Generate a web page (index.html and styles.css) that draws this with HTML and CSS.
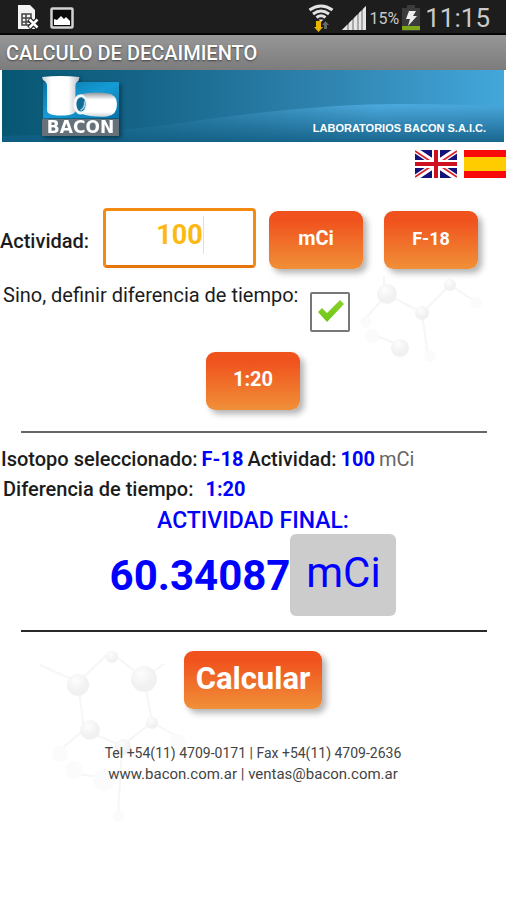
FILE: index.html
```html
<!DOCTYPE html>
<html lang="es">
<head>
<meta charset="utf-8">
<meta name="viewport" content="width=device-width, initial-scale=1">
<title>Calculo de decaimiento</title>
<link rel="stylesheet" href="styles.css">
</head>
<body>
<div class="status">
  <div class="status-group">
    <svg width="22" height="26" viewBox="0 0 22 26" aria-hidden="true">
      <path d="M0 0h12l5 5v19H0z" fill="#f4f4f4"/>
      <path d="M4 9h9v11H4zM4 13h9M4 17h9M8 9v11" fill="none" stroke="#444" stroke-width="1.500"/>
      <path d="M11 14l9 9M20 14l-9 9" stroke="#1d1d1d" stroke-width="5"/>
      <path d="M11.500 14.500l8 8M19.500 14.500l-8 8" stroke="#fff" stroke-width="2.500"/>
    </svg>
    <svg width="24" height="22" viewBox="0 0 24 22" aria-hidden="true">
      <rect x="1.500" y="1.500" width="21" height="19" rx="1" fill="#0c0c0c" stroke="#d2d2d2" stroke-width="2.500"/>
      <path d="M4 18v-6l3 1 4-4 3 3 2-2 4 4v4z" fill="#fff"/>
    </svg>
  </div>
  <div class="status-group status-right">
    <svg width="26" height="28" viewBox="0 0 26 28" aria-hidden="true">
      <g fill="none" stroke="#e2e2e2" stroke-width="3">
        <path d="M1.500 6q11.500-8 23 0"/><path d="M5 10q8-6 16 0"/><path d="M8.500 13.500q4.500-3.500 9 0"/>
      </g>
      <path d="M10.500 15.500h5L13 18z" fill="#e2e2e2"/>
      <path d="M8 17h5v6h2l-4.500 5L6 23h2z" fill="#e8b500"/>
      <path d="M16 25v-4h-2l3.500-4 3.500 4h-2v4z" fill="#686868"/>
    </svg>
    <svg class="signal" width="25" height="24" viewBox="0 0 25 24" aria-hidden="true">
      <path d="M0 24L24 0v24z" fill="#a8a8a8"/>
      <path d="M0 24l5-5v5zM7 24v-7l3-3v10zM12 24V12l3-3v15zM17 24V7l2-2v19zM21 24V3l3-3v24z" fill="#e6e6e6"/>
    </svg>
    <span class="percent">15%</span>
    <svg width="18" height="26" viewBox="0 0 18 26" aria-hidden="true">
      <path d="M0 3h5V0h8v3h5v23H0z" fill="#3b3b3b"/>
      <path d="M0 21h18v4H0z" fill="#7da61a"/>
      <path d="M7 6h7l-3 5h4L6 21l2-7H4z" fill="#eee"/>
    </svg>
    <span class="clock">11:15</span>
  </div>
</div>
<h1 class="title">CALCULO DE DECAIMIENTO</h1>

<header class="banner">
  <svg class="banner-wave" viewBox="0 0 502 72" preserveAspectRatio="none" aria-hidden="true">
    <defs>
      <linearGradient id="sky"><stop offset="0" stop-color="#075773"/><stop offset=".3" stop-color="#17668b"/><stop offset=".65" stop-color="#2f84b0"/><stop offset="1" stop-color="#43a7db"/></linearGradient>
      <linearGradient id="waveX"><stop offset="0" stop-color="#0b6286"/><stop offset=".35" stop-color="#2d82ab"/><stop offset=".75" stop-color="#4daade"/><stop offset="1" stop-color="#4aa8dc"/></linearGradient>
      <linearGradient id="waveY" x2="0" y2="1"><stop offset="0" stop-color="#105b80" stop-opacity="0"/><stop offset="1" stop-color="#105b80" stop-opacity=".85"/></linearGradient>
    </defs>
    <path d="M0 0h502v72H0z" fill="url(#sky)"/>
    <path d="M0 66Q80 66 160 56Q300 34 400 34Q455 34 502 37V72H0z" fill="url(#waveX)"/>
    <path d="M0 66Q80 66 160 56Q300 34 400 34Q455 34 502 37V72H0z" fill="url(#waveY)"/>
  </svg>
  <div class="logo">
    <svg class="logo-art" viewBox="0 0 76 42" aria-hidden="true">
      <defs>
        <linearGradient id="blue" x2="1" y2="1"><stop offset="0" stop-color="#0873a6"/><stop offset=".5" stop-color="#159bd4"/><stop offset="1" stop-color="#0874a8"/></linearGradient>
        <linearGradient id="tube"><stop offset="0" stop-color="#cbd2d8"/><stop offset=".25" stop-color="#fff"/><stop offset=".7" stop-color="#fff"/><stop offset="1" stop-color="#b4bbc2"/></linearGradient>
        <linearGradient id="lying" x2="0" y2="1"><stop offset="0" stop-color="#8b949c"/><stop offset=".3" stop-color="#fff"/><stop offset=".8" stop-color="#fff"/><stop offset="1" stop-color="#cbd2d8"/></linearGradient>
      </defs>
      <path d="M1 6h75v36H1z" fill="url(#blue)"/>
      <path d="M0 1q18-2 37 0l-1 4q-3 1-3 5v24q0 5-14 5T5 34V10Q5 6 1 4z" fill="url(#tube)"/>
      <path d="M38 18q12-3 26-1 10 1 10 11 0 11-10 12-15 1-26-3z" fill="url(#lying)"/>
      <ellipse cx="38" cy="28" rx="7" ry="10" fill="#f4f7fa"/>
      <ellipse cx="38.500" cy="28" rx="4.500" ry="7" fill="#126c96"/>
      <path d="M38 34q5-3 4-9" fill="none" stroke="#9ed3ee" stroke-width="1.500"/>
    </svg>
    <span class="logo-name">BACON</span>
  </div>
  <span class="company">LABORATORIOS BACON S.A.I.C.</span>
</header>

<main class="page">
  <nav class="flags">
    <a class="flag" href="#en" aria-label="English">
      <svg viewBox="0 0 42 28" preserveAspectRatio="none" aria-hidden="true">
        <path d="M0 0h42v28H0z" fill="#12127a"/>
        <path d="M0 0l42 28M42 0L0 28" stroke="#fff" stroke-width="6"/>
        <path d="M0 1l18 12M42 1L24 13M0 27l18-12M42 27L24 15" stroke="#d8232f" stroke-width="1.800"/>
        <path d="M21 0v28M0 14h42" stroke="#fff" stroke-width="8"/>
        <path d="M21 0v28M0 14h42" stroke="#cf1020" stroke-width="4"/>
      </svg>
    </a>
    <a class="flag" href="#es" aria-label="Español">
      <svg viewBox="0 0 42 28" preserveAspectRatio="none" aria-hidden="true">
        <path d="M0 0h42v28H0z" fill="#f80a0a"/><path d="M0 7h42v14H0z" fill="#fc0"/>
      </svg>
    </a>
  </nav>

  <form class="form">
    <svg class="molecule molecule-top" viewBox="0 0 130 130" aria-hidden="true">
      <defs><radialGradient id="atom" cx=".4" cy=".3"><stop offset="0" stop-color="#fdfdfd"/><stop offset="1" stop-color="#f1f1f1"/></radialGradient></defs>
      <path d="M6 72L27 48 62 67 90 39 116 56M62 67l6 44M12 88l30 12M24 30v12" fill="none" stroke="#f6f6f6" stroke-width="2"/>
      <g fill="url(#atom)"><circle cx="27" cy="48" r="10"/><circle cx="62" cy="67" r="7"/><circle cx="90" cy="39" r="6"/><circle cx="40" cy="102" r="9"/></g>
      <g fill="#fbfbfb"><circle cx="6" cy="76" r="6"/><circle cx="12" cy="90" r="7"/><circle cx="116" cy="57" r="6"/><circle cx="70" cy="110" r="6"/></g>
    </svg>
    <div class="row">
      <label class="activity-label" for="activity">Actividad:</label>
      <span class="field"><input id="activity" type="text" inputmode="decimal" value="100"><i class="caret"></i></span>
      <button class="btn" type="button">mCi</button>
      <button class="btn btn-small" type="button">F-18</button>
    </div>
    <div class="row-check">
      <label for="diff">Sino, definir diferencia de tiempo:</label>
      <span class="check">
        <input id="diff" type="checkbox" checked>
        <svg viewBox="0 0 28 24" aria-hidden="true">
          <defs><linearGradient id="tick" x2="0" y2="1"><stop offset="0" stop-color="#8ad22c"/><stop offset="1" stop-color="#6cc714"/></linearGradient></defs>
          <path d="M1 13l4-4 5 5L23 1l4 4-17 18z" fill="url(#tick)"/>
        </svg>
      </span>
    </div>
    <button class="btn btn-time" type="button">1:20</button>
  </form>

  <hr class="rule rule-soft">

  <section class="results">
    <p class="line"><b>Isotopo seleccionado:</b> <b class="value">F-18</b> <b>Actividad:</b> <b class="value">100</b> <span class="unit">mCi</span></p>
    <p class="line line-time"><b>Diferencia de tiempo:</b><b class="value">1:20</b></p>
    <h2 class="final-title">ACTIVIDAD FINAL:</h2>
    <div class="final"><output class="final-value">60.34087</output><button class="final-unit" type="button">mCi</button></div>
  </section>

  <hr class="rule">

  <section class="bottom">
    <svg class="molecule molecule-bottom" viewBox="0 0 160 190" aria-hidden="true">
      <path d="M10 33l38 17L80 20l34 26 8 44 24 14M48 50l6 48 38 16 30-24M54 98l-24 20M38 140l34 6M92 114l-4 70M114 46l20-14" fill="none" stroke="#f6f6f6" stroke-width="2"/>
      <g fill="url(#atom)"><circle cx="48" cy="53" r="11"/><circle cx="82" cy="25" r="6"/><circle cx="114" cy="47" r="13"/><circle cx="60" cy="98" r="10"/><circle cx="93" cy="115" r="8"/><circle cx="122" cy="91" r="6"/></g>
      <g fill="#fbfbfb"><circle cx="30" cy="122" r="8"/><circle cx="44" cy="138" r="9"/><circle cx="74" cy="148" r="11"/><circle cx="148" cy="110" r="8"/><circle cx="89" cy="184" r="6"/></g>
    </svg>
    <button class="btn btn-calc" type="button">Calcular</button>
    <footer class="contact">
      <p class="phone">Tel +54(11) 4709-0171 | Fax +54(11) 4709-2636</p>
      <p class="web">www.bacon.com.ar | ventas@bacon.com.ar</p>
    </footer>
  </section>
</main>
</body>
</html>
```
FILE: styles.css
```css
* { box-sizing: border-box; }
body {
  margin: 0;
  min-height: 100vh;
  background: #fff;
  color: #1c1c1c;
  font-family: Roboto, "Liberation Sans", sans-serif;
}
p, h1, h2 { margin: 0; }
button, input { font-family: inherit; }

.status {
  display: flex;
  justify-content: space-between;
  align-items: center;
  height: 35px;
  padding: 3px 16px 0 18px;
  background: #1d1d1d;
  border-bottom: 2px solid #050505;
  color: #c9c9c9;
}
.status-group { display: flex; align-items: center; gap: 10px; }
.status-right { gap: 3px; }
.signal { margin-left: 5px; }
.percent { font-size: 16px; }
.clock { font-size: 26px; line-height: 28px; margin-left: 2px; }

.title {
  height: 35px;
  padding-left: 6px;
  background: linear-gradient(#979797, #7c7c7c);
  color: #fff;
  font-size: 20px;
  font-weight: 500;
  line-height: 36px;
  text-shadow: 0 1px 2px #444;
}

.banner {
  display: flex;
  justify-content: space-between;
  align-items: flex-end;
  height: 72px;
  margin: 0 2px;
  padding: 0 18px 6px 40px;
  position: relative;
}
.banner-wave { position: absolute; inset: 0; width: 100%; height: 100%; }
.logo {
  display: flex;
  flex-direction: column;
  position: relative;
  width: 77px;
  filter: drop-shadow(2px 2px 2px #06384e);
}
.logo-art { display: block; width: 100%; }
.logo-name {
  background: #66717a;
  color: #fff;
  font: bold 17px/17px "DejaVu Sans", sans-serif;
  text-align: center;
}
.company {
  position: relative;
  color: #fff;
  font: bold 11px/16px "Liberation Sans", sans-serif;
}

.flags { display: flex; justify-content: flex-end; gap: 7px; padding-top: 8px; }
.flag { width: 42px; height: 28px; }
.flag svg { display: block; width: 100%; height: 100%; }

.form { position: relative; padding-top: 29px; }
.molecule { position: absolute; z-index: -1; }
.molecule-top { top: 68px; right: 16px; width: 130px; }

.row { display: flex; align-items: center; gap: 21px; padding-right: 28px; }
.activity-label { width: 89px; margin-right: -7px; font-size: 20px; font-weight: 500; padding-top: 6px; }
.field { position: relative; flex: 1; margin-right: -8px; }
.field input {
  display: block;
  width: 100%;
  height: 60px;
  padding: 0 0 6px;
  border: 3px solid #f58a12;
  border-bottom-color: #e8740c;
  border-radius: 4px;
  background: #fff;
  color: #fdb913;
  font-size: 27px;
  font-weight: 700;
  text-align: center;
  outline: none;
}
.caret { position: absolute; top: 8px; left: 100px; width: 1px; height: 38px; background: #fbd9b8; }

.btn {
  width: 94px;
  height: 58px;
  padding: 0 0 4px;
  border: 0;
  border-radius: 9px;
  background: linear-gradient(#f0521d 15%, #f09038);
  box-shadow: 4px 4px 6px rgba(0, 0, 0, .3);
  color: #fff;
  font-size: 20px;
  font-weight: 700;
}
.row .btn { margin-top: 4px; }
.btn-small { font-size: 18px; }
.btn-time { display: block; margin: 20px auto 0; }

.row-check { display: flex; align-items: flex-start; gap: 12px; padding: 23px 0 0 3px; font-size: 20px; line-height: 24px; }
.row-check label { margin-top: -9px; }
.check { position: relative; width: 40px; height: 40px; }
.check input {
  appearance: none;
  display: block;
  width: 100%;
  height: 100%;
  margin: 0;
  border: 2px solid #777;
  border-radius: 2px;
  background: #fff;
}
.check svg { position: absolute; left: 7px; top: 7px; width: 28px; pointer-events: none; }

.rule { height: 2px; margin: 0 19px 0 21px; border: 0; background: #2a2a2a; }
.rule-soft { margin-top: 21px; background: #666; }

.results { padding: 14px 0 12px; }
.line { display: flex; gap: 4px; padding-left: 1px; font-size: 20px; line-height: 24px; }
.line b { font-weight: 500; }
.line .value, .final-title { color: #00f; }
.line .value { font-weight: 700; }
.unit { color: #666; }
.line-time { gap: 12px; margin-top: 6px; padding-left: 3px; }
.final-title { margin-top: 7px; font-size: 23px; font-weight: 500; line-height: 26px; text-align: center; }
.final { display: flex; justify-content: center; }
.final-value { color: #00f; font-size: 42px; font-weight: 700; line-height: 84px; }
.final-unit {
  width: 106px;
  height: 82px;
  padding: 0 0 6px;
  border: 0;
  border-radius: 6px;
  background: #ccc;
  color: #00f;
  font-size: 42px;
}

.bottom { position: relative; padding-top: 19px; }
.molecule-bottom { top: 0; left: 30px; width: 160px; }
.btn-calc { display: block; width: 138px; margin: 0 auto; font-size: 31px; }
.contact { padding-top: 34px; color: #444; text-align: center; line-height: 21px; }
.phone { font-size: 14px; }
.web { font-size: 15px; }
```
